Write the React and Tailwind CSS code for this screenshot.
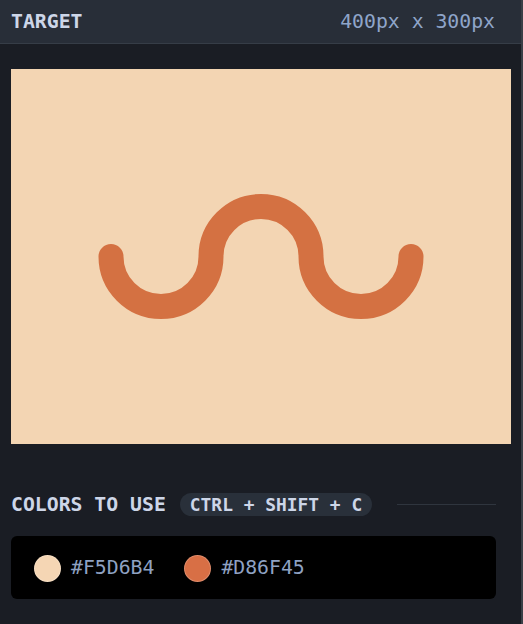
export default function App() {
  const colors = ['#F5D6B4', '#D86F45']

  return (
    <div
      className="w-[523px] h-[624px] bg-[#1a1d24] border-r-2 border-[#3a3f47] overflow-hidden"
      style={{ fontFamily: '"DejaVu Sans Mono", "Liberation Mono", monospace' }}
    >
      {/* header */}
      <div className="h-[44px] bg-[#282e38] border-b border-[#363d47] flex items-center justify-between pl-[11px] pr-[26px] pt-px">
        <span className="text-[19.8px] font-bold text-[#cdd6e8] leading-none">TARGET</span>
        <span className="text-[19.8px] text-[#8fa5c9] leading-none">400px x 300px</span>
      </div>

      <div className="pt-[25px] pl-[11px] pr-[25px]">
        {/* target image */}
        <div className="w-[500px] h-[375px] bg-[#F3D5B3]">
          <svg width="500" height="375" viewBox="0 0 400 300">
            <path
              d="M80 150 A40 40 0 0 0 160 150 A40 40 0 0 1 240 150 A40 40 0 0 0 320 150"
              fill="none"
              stroke="#D47142"
              strokeWidth="20"
              strokeLinecap="round"
            />
          </svg>
        </div>

        {/* colors */}
        <div className="mt-[49px] h-[23px] flex items-center">
          <span className="text-[19.8px] font-bold text-[#cdd6e8] leading-none">COLORS TO USE</span>
          <span className="ml-[14px] h-[23px] px-[10px] rounded-full bg-[#29303a] flex items-center text-[17.9px] font-bold text-[#cdd6e8] leading-none">
            CTRL + SHIFT + C
          </span>
          <div className="ml-[25px] flex-1 h-px bg-[#2f353e]" />
        </div>

        <div className="mt-[20px] h-[63px] bg-black rounded-md flex items-center pl-[23px] gap-[30px] pt-px">
          {colors.map((c) => (
            <div key={c} className="flex items-center gap-[10px]">
              <div
                className="w-[27px] h-[27px] rounded-full border border-white/20"
                style={{ backgroundColor: c }}
              />
              <span className="text-[19.8px] text-[#8fa2c3] leading-none">{c}</span>
            </div>
          ))}
        </div>
      </div>
    </div>
  )
}
